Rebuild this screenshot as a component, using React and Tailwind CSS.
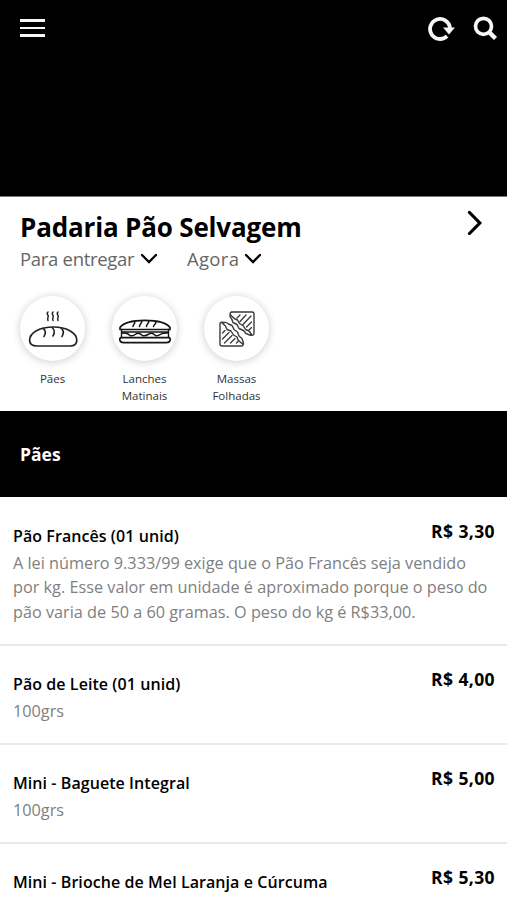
const categories = [
  { id: "paes", label: "Pães", Icon: BreadIcon },
  { id: "lanches", label: "Lanches Matinais", Icon: SandwichIcon },
  { id: "massas", label: "Massas Folhadas", Icon: ToastIcon },
];

const products = [
  {
    name: "Pão Francês (01 unid)",
    price: "R$ 3,30",
    lines: [
      "A lei número 9.333/99 exige que o Pão Francês seja vendido",
      "por kg. Esse valor em unidade é aproximado porque o peso do",
      "pão varia de 50 a 60 gramas. O peso do kg é R$33,00.",
    ],
  },
  { name: "Pão de Leite (01 unid)", price: "R$ 4,00", lines: ["100grs"] },
  { name: "Mini - Baguete Integral", price: "R$ 5,00", lines: ["100grs"] },
  { name: "Mini - Brioche de Mel Laranja e Cúrcuma", price: "R$ 5,30", lines: [] },
];

function ChevronIcon() {
  return (
    <svg width="18" height="12" viewBox="0 0 18 12" fill="none" stroke="black" strokeWidth="2.3" strokeLinecap="round">
      <path d="M2 2L9 9L16 2" />
    </svg>
  );
}

function BreadIcon() {
  return (
    <svg width="50" height="38" viewBox="0 0 50 38" fill="none" stroke="#222" strokeLinecap="round">
      <path d="M9 36H42C46.5 36 48.8 33.8 48.8 30.3C48.8 22.3 38 17 25.5 17C12 17 1.6 22.3 1.6 30.3C1.6 33.8 4.5 36 9 36Z" strokeWidth="1.7" />
      <path d="M15 18.3C18 20.5 17.8 23.5 16 26.5M24 17.5C27 20 26.8 23 25 26M33 18C36 20.5 35.8 23.5 34 26.5" strokeWidth="1.6" />
      <path d="M20 2C17.5 4 21.5 5.5 20 7.5C19.5 8.500 19.5 9.5 20 10.5M25 2C22.5 4 26.5 5.5 25 7.5C24.5 8.500 24.5 9.5 25 10.5M30 2C27.5 4 31.5 5.5 30 7.5C29.5 8.500 29.5 9.5 30 10.5" strokeWidth="1.5" />
    </svg>
  );
}

function SandwichIcon() {
  return (
    <svg className="mt-[7px]" width="54" height="26" viewBox="0 0 54 26" fill="none" stroke="#151515" strokeLinejoin="round" strokeLinecap="round">
      <path d="M2 10.5V8.500C5 4 15 1.300 27 1.300S49 4 52 8.500V10.500Z" strokeWidth="1.700" />
      <path d="M16.500 3C18 4.500 15 5 15 7.500M23.500 2C25 3.500 21.500 4.500 21.500 7.500M30.500 2C32 3.500 28.500 4.500 28.500 7.500M37.500 3C39 4.500 36 5 35.500 7.500" strokeWidth="1.500" />
      <path d="M3.500 10.500V18.500M50.500 10.500V18.500M4 13H50" strokeWidth="1.400" />
      <path d="M4 14C8 14 9 14 12 16.500C14 17.500 16 16.500 18 15C20 13.500 21.500 14 24.500 16.500C26.500 17.500 28.500 16.500 31 15C33 13.500 34.500 14 37.500 16.500C39.500 17.500 42 16 44 14.500C46 13.800 48 14 50 14" strokeWidth="1.500" />
      <path d="M2.500 18.700H51.500C53 20 52.500 23.700 48.500 23.700H5.500C1.500 23.700 1 20 2.500 18.700Z" strokeWidth="1.700" />
    </svg>
  );
}

function ToastIcon() {
  return (
    <svg width="36" height="36" viewBox="0 0 36 36" fill="none" stroke="#3a3a3a" strokeLinecap="round" strokeLinejoin="round">
      <path d="M13 1H33C34.2 1 35 1.8 35 3V22C35 24 33 25 31.5 23.8" strokeWidth="1.4" />
      <path d="M13 1C11 1.200 10.500 3 12 4.500L16 8L18.500 9L20.500 12.500L24.500 15L26.500 18.500L30 20L32.500 23.500" strokeWidth="1.4" />
      <path d="M11.500 3.500C10.500 5 11 6.500 12.500 7.500L14 11.500L18 13.500L20 17.500L24.500 19.500L27 22.500L31.500 24.300" strokeWidth="1.4" />
      <path d="M5 12C3.5 10.5 1 11 1 13V33C1 34.2 1.8 35 3 35H22C24 35 25 33.500 24 32" strokeWidth="1.4" />
      <path d="M3 12L6.500 15L8 18.500L12 20L14.500 24L18 26L19 29L23.500 33" strokeWidth="1.4" />
      <path d="M4.500 11.500C6.500 11 8.500 12 9.500 13L13 14.500L15 18.500L18.500 21L20 25L23 27.500L24.500 32" strokeWidth="1.4" />
      <path d="M18 7L21 4M21 10.500L27 4M24 13.500L32 5M27.500 16L32.500 11M30 19L32.500 16.500M3.500 22L6 19.500M3.500 28L10 21.500M5.500 32L13 24.500M11.500 32L16 27.500M17.500 32L19 30.500" strokeWidth="1.3" />
    </svg>
  );
}

function Header() {
  return (
    <header className="flex h-[196px] items-start justify-between bg-black pl-5 pr-[9px] pt-4 text-[#f7f7f7]">
      <button aria-label="Menu" className="mt-[3px] flex w-[25px] flex-col gap-[5px]">
        <span className="h-[2.5px] w-full bg-current" />
        <span className="h-[2.5px] w-full bg-current" />
        <span className="h-[2.5px] w-full bg-current" />
      </button>
      <div className="flex gap-[18px]">
        <button aria-label="Atualizar">
          <svg width="28" height="26" viewBox="0 0 28 26" fill="none">
            <path d="M20 20.200A10 10 0 1 1 23 12" stroke="currentColor" strokeWidth="3.8" />
            <path d="M16 11.500H28L22 18.500Z" fill="currentColor" />
          </svg>
        </button>
        <button aria-label="Buscar">
          <svg width="25" height="26" viewBox="0 0 25 26" fill="none" stroke="currentColor">
            <circle cx="10.500" cy="10.300" r="8" strokeWidth="3.700" />
            <path d="M16 16L22.500 22.500" strokeWidth="4.500" />
          </svg>
        </button>
      </div>
    </header>
  );
}

function StoreInfo() {
  return (
    <section className="h-[215px] border-t border-[#777] bg-white">
      <div className="flex items-start justify-between pl-5 pr-6 pt-3">
        <h1 className="text-[26px] font-bold leading-9 tracking-[-0.17px] whitespace-nowrap">Padaria Pão Selvagem</h1>
        <svg width="16" height="26" viewBox="0 0 16 26" fill="none" stroke="black" strokeWidth="3.200" strokeLinecap="round">
          <path d="M2.500 3.500L12.800 14L2.500 24.500" />
        </svg>
      </div>
      <div className="flex h-7 items-center pl-5 text-[18.5px] leading-7 text-[#666]">
        <button className="flex w-[167px] items-center gap-[6px] tracking-[-0.3px]">
          <span>Para entregar</span>
          <ChevronIcon />
        </button>
        <button className="flex items-center gap-[5px] tracking-[0.3px]">
          <span>Agora</span>
          <ChevronIcon />
        </button>
      </div>
      <nav className="flex gap-[27px] pl-5 pt-[23px]">
        {categories.map(({ id, label, Icon }) => (
          <button key={id} className="flex w-[65px] flex-col items-center">
            <span className="flex size-[65px] items-center justify-center rounded-full bg-white shadow-[0_1px_9px_rgba(0,0,0,0.2)]">
              <Icon />
            </span>
            <span className="mt-[9px] text-center text-[11.5px] leading-[17px] text-[#333]">{label}</span>
          </button>
        ))}
      </nav>
    </section>
  );
}

function Product({ product }) {
  return (
    <li className="border-b-2 border-[#e9e9e9] px-[13px] pb-5 pt-6">
      <div className="flex items-start justify-between">
        <h3 className="pt-[1px] text-[16px] font-semibold leading-[26px] tracking-[0.07px] whitespace-nowrap">{product.name}</h3>
        <span className="-mt-[4px] -mr-[1px] text-[17.5px] font-bold leading-[27px] tracking-[0.4px] whitespace-nowrap">{product.price}</span>
      </div>
      <p className="pt-[1.5px] text-[16.25px] leading-[24.5px] text-[#808080]">
        {product.lines.map((line) => (
          <span key={line} className="block whitespace-nowrap">{line}</span>
        ))}
      </p>
    </li>
  );
}

export default function App() {
  return (
    <div className="h-[900px] w-[507px] overflow-hidden bg-white font-['Open_Sans',sans-serif] text-black">
      <Header />
      <StoreInfo />
      <h2 className="flex h-[86px] items-center bg-black pl-5 text-[17.5px] font-bold text-white">Pães</h2>
      <ul className="pt-[1px]">
        {products.map((product) => (
          <Product key={product.name} product={product} />
        ))}
      </ul>
    </div>
  );
}
